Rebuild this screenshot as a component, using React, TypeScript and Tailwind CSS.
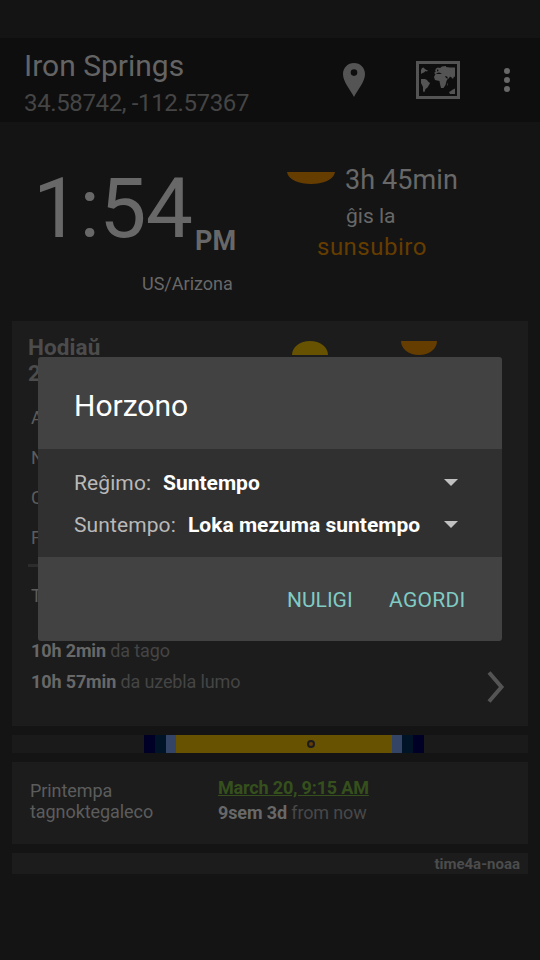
import React from "react";

const dayBar = [
  { width: 132, color: "#1a1a1a" },
  { width: 11, color: "#000026" },
  { width: 11, color: "#001428" },
  { width: 10, color: "#334466" },
  { width: 216, color: "#665200" },
  { width: 10, color: "#334466" },
  { width: 11, color: "#001428" },
  { width: 11, color: "#000026" },
  { width: 104, color: "#1a1a1a" },
];

function MapIcon() {
  return (
    <svg className="ml-[51px] block h-[38px] w-11" viewBox="0 0 44 38" fill="#545454">
      <path fillRule="evenodd" d="M0 0H44V38H0ZM3 3V35H41V3Z" />
      <path d="M5 9L6 7L7.500 6.500L9 8L11 9.500L9.500 10L8 11.500L6.500 12L5 13ZM9 9L11 9L12 10L10 10.500Z" />
      <path d="M5 18L9 18L11 19L12 20.500L14 22L13 24L11.500 26.500L9.500 28L8.500 31L7 30.500L7 26L5 22Z" />
      <path d="M18 12L20 10.500L19 10L20 7.500L22 6.500L24 7L26 5.500L30 5L30 6L34 6.500L39 6.500V16L38 15.500L37 18L35.500 16.500L34 15.500L32.500 18L31 15.500L29 15L30 17L32 17.500L30.500 20L29.500 24L27.500 27H25L24 23L23.500 20L19 19L18 16L19.500 13Z" />
      <path d="M20 12.500L23 11.500L26 12.500L24 13L21 13ZM21 9L22 8L22.500 10L21 10.500Z" fill="#0e0e0e" />
      <path d="M31 23L32 21.500L32 24L31 25Z" opacity=".6" />
      <path d="M33 31L35 30L36 29L39 27.500V33H34Z" />
    </svg>
  );
}

function Header() {
  return (
    <header className="flex h-[84px] bg-[#0e0e0e] pl-6">
      <div className="w-[319px] pt-[10px]">
        <h1 className="h-9 text-[30px] leading-9 text-[#646464]">Iron Springs</h1>
        <p className="mt-[5px] text-[24px] leading-7 tracking-[-0.36px] text-[#454545]">34.58742, -112.57367</p>
      </div>
      <div className="flex items-start pt-[23px]">
        <svg className="mt-[2px] block h-[34px] w-[22px]" viewBox="0 0 22 34" fill="#545454">
          <path fillRule="evenodd" d="M11 0C4.800 0 0 4.800 0 11C0 19 7 26 11 34C15 26 22 19 22 11C22 4.800 17.200 0 11 0ZM11 6.300A3.300 3.300 0 1 1 11 12.900A3.300 3.300 0 0 1 11 6.300Z" />
        </svg>
        <MapIcon />
        <svg className="ml-11 mt-[7px] block h-6 w-[6px]" viewBox="0 0 6 24" fill="#686868">
          <circle cx="3" cy="3" r="3" />
          <circle cx="3" cy="12" r="3" />
          <circle cx="3" cy="21" r="3" />
        </svg>
      </div>
    </header>
  );
}

function Clock() {
  return (
    <section className="flex h-[199px] text-[#686868]">
      <div className="w-[287px]">
        <div className="flex pl-[33px] pt-[37px]">
          <span className="w-[162px] text-[84px] leading-[100px] tracking-[-0.7px]">1:54</span>
          <span className="mt-[66px] text-[27px] font-bold leading-8">PM</span>
        </div>
        <p className="ml-[142px] mt-[13px] text-[18px] leading-6">US/Arizona</p>
      </div>
      <div>
        <div className="flex pt-10">
          <svg className="mt-[10px] block h-3 w-12" viewBox="0 0 48 12" fill="#663d00">
            <path d="M0 0H48C46 16 2 16 0 0Z" />
          </svg>
          <span className="ml-[10px] text-[27px] leading-9 tracking-[0.1px]">3h 45min</span>
        </div>
        <p className="ml-[59px] mt-[4px] text-[21px] leading-[28px]">ĝis la</p>
        <p className="ml-[30px] mt-[2px] text-[24px] leading-[30px] tracking-[0.5px] text-[#663d00]">sunsubiro</p>
      </div>
    </section>
  );
}

function TodayCard() {
  return (
    <section className="flex h-[405px] flex-col bg-[#1c1c1c] text-[18px]">
      <div className="flex h-[72px] pl-4 pt-[13px]">
        <div className="w-[264px] text-[22.500px] font-bold leading-[26px] tracking-[0.1px] text-[#4c4c4c]">
          <p>Hodiaŭ</p>
          <p>2</p>
        </div>
        <svg className="mt-[7px] block h-[14px] w-9" viewBox="0 0 36 14" fill="#665200">
          <path d="M0 14C0 6 8 0 18 0S36 6 36 14Z" />
        </svg>
        <svg className="ml-[73px] mt-[7px] block h-[14px] w-9" viewBox="0 0 36 14" fill="#663d00">
          <path d="M0 0C0 8 8 14 18 14S36 8 36 0Z" />
        </svg>
      </div>
      <div className="pl-[19px] pt-[5px] leading-10 text-[#5c5c5c]">
        <p>A</p>
        <p>N</p>
        <p>C</p>
        <p>F</p>
      </div>
      <div className="ml-4 mt-[6px] h-[3px] w-[470px] bg-[#2c2c2c]" />
      <p className="ml-[19px] mt-[9px] leading-10 text-[#5c5c5c]">T</p>
      <div className="flex pl-[19px] pt-[19px]">
        <div className="w-[456px] leading-[31px] tracking-[-0.13px] text-[#454545]">
          <p><b className="text-[#686868]">10h 2min</b> da tago</p>
          <p><b className="text-[#686868]">10h 57min</b> da uzebla lumo</p>
        </div>
        <svg className="mt-9 block h-8 w-[18px]" viewBox="0 0 18 32" fill="none" stroke="#545454" strokeWidth="4">
          <path d="M2 1.500L14.500 16L2 30.500" />
        </svg>
      </div>
    </section>
  );
}

function Dialog() {
  return (
    <div className="absolute left-[38px] top-[357px] flex h-[284px] w-[464px] flex-col overflow-hidden rounded-[3px] bg-[#424242]">
      <h2 className="h-[92px] pl-9 pt-[31px] text-[30px] leading-9 text-white">Horzono</h2>
      <div className="h-[108px] bg-[#303030] pl-9 pr-[44px] pt-[14px] text-[21px] text-[#b9b9b9]">
        <div className="flex h-[42px] items-center">
          <span className="w-[89px] tracking-[0.1px]">Reĝimo:</span>
          <b className="text-white">Suntempo</b>
          <svg className="mb-1 ml-auto block h-[7px] w-[14px]" viewBox="0 0 14 7" fill="#c1c1c1"><path d="M0 0H14L7 7Z" /></svg>
        </div>
        <div className="flex h-[42px] items-center">
          <span className="w-[114px] tracking-[0.1px]">Suntempo:</span>
          <b className="whitespace-nowrap text-white">Loka mezuma suntempo</b>
          <svg className="mb-1 ml-auto block h-[7px] w-[14px]" viewBox="0 0 14 7" fill="#c1c1c1"><path d="M0 0H14L7 7Z" /></svg>
        </div>
      </div>
      <div className="flex h-[84px] items-center pt-1 text-[21px] text-[#80cbc4]">
        <button className="ml-[249px] w-[102px] text-left">NULIGI</button>
        <button className="tracking-[0.3px]">AGORDI</button>
      </div>
    </div>
  );
}

export default function App() {
  return (
    <div className="relative h-[960px] w-[540px] overflow-hidden bg-[#141414] pt-[38px] font-[Roboto,sans-serif]">
      <Header />
      <Clock />
      <main className="flex flex-col gap-[9px] px-3">
        <TodayCard />
        <div className="relative flex h-[18px]">
          {dayBar.map((part, i) => (
            <div key={i} className="h-full shrink-0" style={{ width: part.width, background: part.color }} />
          ))}
          <div className="absolute left-[295px] top-[5px] h-2 w-2 rounded-full border-2 border-[#1c1c1c] bg-[#663d00]" />
        </div>
        <section className="flex h-[82px] bg-[#1c1c1c] pl-[18px] text-[18px] text-[#5c5c5c]">
          <p className="w-[188px] pt-[18px] leading-[21px] tracking-[-0.07px]">Printempa<br />tagnoktegaleco</p>
          <div className="pt-[13px] leading-[25px] tracking-[-0.13px] text-[#484848]">
            <p className="font-bold tracking-[-0.17px] text-[#35501c] underline">March 20, 9:15 AM</p>
            <p><b className="text-[#686868]">9sem 3d</b> from now</p>
          </div>
        </section>
        <footer className="h-[21px] bg-[#1c1c1c] pr-2 text-right text-[15px] font-bold leading-[22px] text-[#4c4c4c]">time4a-noaa</footer>
      </main>
      <Dialog />
    </div>
  );
}
